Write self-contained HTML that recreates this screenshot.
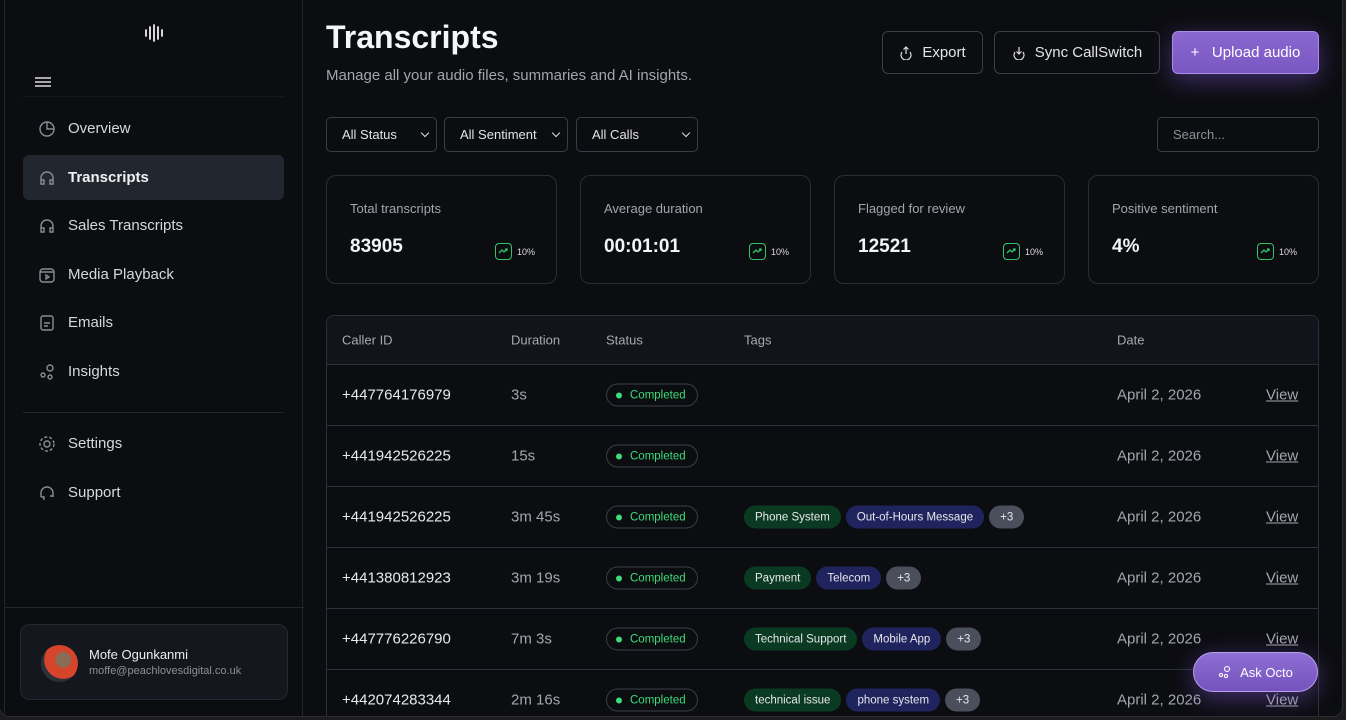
<!DOCTYPE html>
<html><head><meta charset="utf-8"><style>
*{box-sizing:border-box;margin:0;padding:0}
body{width:1346px;height:720px;overflow:hidden;background:#1c1c1e;font-family:"Liberation Sans",sans-serif;color:#e8e9ec}
.frame{position:absolute;left:-1px;top:-1px;width:1344px;height:718px;background:#0c0d11;border:1px solid #2a2c31;border-radius:0 0 10px 10px;overflow:hidden}
.side{position:absolute;left:4px;top:0;width:299px;height:716px;border-right:1px solid #22252c;border-left:1px solid #22252c;background:#0c0d11}
.nav{position:absolute;left:18px;width:261px;height:45px;border-radius:6px;display:flex;align-items:center;padding-left:15px;font-size:15px;color:#d6d8dc}
.nav svg{width:18px;height:18px;margin-right:12px;stroke:#8a8d94;fill:none;stroke-width:1.4}
.nav.act{background:#22262f;font-weight:bold;color:#f0f1f3}
.hr{position:absolute;left:18px;width:261px;height:1px;background:#23262d}
.btn{position:absolute;top:31px;height:43px;border:1px solid #3a3e47;border-radius:6px;display:flex;align-items:center;justify-content:center;font-size:15px;color:#e3e4e7}
.sel{position:absolute;top:117px;height:35px;border:1px solid #3a3e47;border-radius:5px;font-size:13px;padding-left:15px;display:flex;align-items:center;color:#e3e4e7}
.sel.dd:after{content:"";position:absolute;right:8px;top:12px;width:5px;height:5px;border-right:1.5px solid #ddd;border-bottom:1.5px solid #ddd;transform:rotate(45deg)}
.card{position:absolute;top:175px;width:231px;height:109px;border:1px solid #2a2d34;border-radius:10px}
.card .l{position:absolute;left:23px;top:25px;font-size:13px;color:#a3a6ad}
.card .v{position:absolute;left:23px;top:60px;font-size:19px;font-weight:bold;color:#f3f4f6}
.card .b{position:absolute;left:168px;top:67px;width:17px;height:17px;border:1.5px solid #34c46a;border-radius:4px}
.card .b svg{position:absolute;left:2px;top:2px}
.card .p{position:absolute;left:190px;top:71px;font-size:9px;color:#ddd}
.tbl{position:absolute;left:326px;top:315px;width:993px;height:420px;border:1px solid #2c3039;border-radius:8px;overflow:hidden}
.th{position:absolute;top:0;left:0;right:0;height:49px;background:#11141a;border-bottom:1px solid #2c3039;font-size:13px;color:#a7aab1}
.row{position:absolute;left:0;right:0;height:61px;border-bottom:1px solid #2c313b;font-size:15px}
.c{position:absolute;top:50%;transform:translateY(-50%);white-space:nowrap}
.st{height:23px;border:1px solid #3a3e47;border-radius:12px;font-size:11.5px;color:#3ddc7a;padding:0 11px 0 23px;display:flex;align-items:center}
.st:before{content:"";position:absolute;left:9px;top:8px;width:6px;height:6px;border-radius:50%;background:#3ddc7a}
.tags{display:flex;gap:5px}
.tg{height:23px;border-radius:12px;font-size:11.5px;padding:0 11px;display:flex;align-items:center;color:#e6e7ea}
.g{background:#0b3a23}.bl{background:#20245e}.gr{background:#4a4f5b}
</style></head><body><div class="frame">
<div class="side">
 <svg style="position:absolute;left:139px;top:24px" width="20" height="18" viewBox="0 0 20 18" stroke="#eee" stroke-width="1.8" stroke-linecap="round"><path d="M2 6v6M6 3v12M10 1v16M14 3v12M18 6v6"/></svg>
 <svg style="position:absolute;left:30px;top:76px" width="16" height="12" stroke="#ddd" stroke-width="1.5"><path d="M0 2h16M0 6h16M0 10h16"/></svg>
 <div class="hr" style="top:96px;background:#15171c"></div>
 <div class="nav" style="top:106px"><svg viewBox="0 0 18 18"><circle cx="9" cy="9" r="7"/><path d="M9 2v7h7"/></svg>Overview</div>
 <div class="nav act" style="top:155px"><svg viewBox="0 0 18 18"><path d="M3 12V9a6 6 0 0112 0v3M3 12v3h3v-4H3M15 12v3h-3v-4h3"/></svg>Transcripts</div>
 <div class="nav" style="top:203px"><svg viewBox="0 0 18 18"><path d="M3 12V9a6 6 0 0112 0v3M3 12v3h3v-4H3M15 12v3h-3v-4h3"/></svg>Sales Transcripts</div>
 <div class="nav" style="top:252px"><svg viewBox="0 0 18 18"><rect x="2" y="3" width="14" height="13" rx="3"/><path d="M2 6h14M8 9l3 2-3 2z"/></svg>Media Playback</div>
 <div class="nav" style="top:300px"><svg viewBox="0 0 18 18"><rect x="3" y="2" width="12" height="14" rx="2"/><path d="M6 9h6M6 12h4"/></svg>Emails</div>
 <div class="nav" style="top:349px"><svg viewBox="0 0 18 18"><circle cx="12" cy="5" r="3"/><circle cx="5" cy="12" r="2"/><circle cx="12" cy="14" r="2"/></svg>Insights</div>
 <div class="hr" style="top:412px"></div>
 <div class="nav" style="top:421px"><svg viewBox="0 0 18 18"><circle cx="9" cy="9" r="3"/><circle cx="9" cy="9" r="7" stroke-dasharray="3 2"/></svg>Settings</div>
 <div class="nav" style="top:470px"><svg viewBox="0 0 18 18"><path d="M3 13V9a6 6 0 0112 0v4M3 13h3v3M15 12h-3"/></svg>Support</div>
 <div class="hr" style="top:607px;left:0;width:299px"></div>
 <div style="position:absolute;left:15px;top:624px;width:268px;height:76px;border:1px solid #262930;border-radius:10px;background:#14171d">
  <div style="position:absolute;left:20px;top:20px;width:37px;height:37px;border-radius:50%;background:radial-gradient(circle at 60% 40%,#8a6b55 0 25%,#d6442b 26% 60%,#2c3137 61%)"></div>
  <div style="position:absolute;left:68px;top:22px;font-size:13px;color:#eee">Mofe Ogunkanmi</div>
  <div style="position:absolute;left:68px;top:40px;font-size:11px;color:#8d9097">moffe@peachlovesdigital.co.uk</div>
 </div>
</div>
<div style="position:absolute;left:326px;top:19px;font-size:32px;font-weight:bold;color:#f5f6f8">Transcripts</div>
<div style="position:absolute;left:326px;top:67px;font-size:15px;color:#a3a6ad">Manage all your audio files, summaries and AI insights.</div>
<div class="btn" style="left:882px;width:101px"><svg width="14" height="14" viewBox="0 0 14 14" fill="none" stroke="#ddd" stroke-width="1.2" style="margin-right:9px"><path d="M7 1v7M4.5 3.5L7 1l2.5 2.5M3 6a5 5 0 108 0"/></svg>Export</div>
<div class="btn" style="left:994px;width:166px"><svg width="14" height="14" viewBox="0 0 14 14" fill="none" stroke="#ddd" stroke-width="1.2" style="margin-right:9px"><path d="M7 1v7M4.5 5.5L7 8l2.5-2.5M3 6a5 5 0 108 0"/></svg>Sync CallSwitch</div>
<div class="btn" style="left:1172px;width:147px;border-color:#a88ce6;background:linear-gradient(#8a68d0,#7a57c2);box-shadow:0 6px 24px rgba(130,90,220,.45);color:#fff">+&nbsp;&nbsp; Upload audio</div>
<div class="sel dd" style="left:326px;width:111px">All Status</div>
<div class="sel dd" style="left:444px;width:124px">All Sentiment</div>
<div class="sel dd" style="left:576px;width:122px">All Calls</div>
<div class="sel" style="left:1157px;width:162px;color:#8d9097">Search...</div>
<div class="card" style="left:326px"><div class="l">Total transcripts</div><div class="v">83905</div><div class="b"><svg width="10" height="10" viewBox="0 0 10 10" fill="none" stroke="#34c46a" stroke-width="1.3"><path d="M1 7l3-3 2 2 3-3M7 3h2v2"/></svg></div><div class="p">10%</div></div>
<div class="card" style="left:580px"><div class="l">Average duration</div><div class="v">00:01:01</div><div class="b"><svg width="10" height="10" viewBox="0 0 10 10" fill="none" stroke="#34c46a" stroke-width="1.3"><path d="M1 7l3-3 2 2 3-3M7 3h2v2"/></svg></div><div class="p">10%</div></div>
<div class="card" style="left:834px"><div class="l">Flagged for review</div><div class="v">12521</div><div class="b"><svg width="10" height="10" viewBox="0 0 10 10" fill="none" stroke="#34c46a" stroke-width="1.3"><path d="M1 7l3-3 2 2 3-3M7 3h2v2"/></svg></div><div class="p">10%</div></div>
<div class="card" style="left:1088px"><div class="l">Positive sentiment</div><div class="v">4%</div><div class="b"><svg width="10" height="10" viewBox="0 0 10 10" fill="none" stroke="#34c46a" stroke-width="1.3"><path d="M1 7l3-3 2 2 3-3M7 3h2v2"/></svg></div><div class="p">10%</div></div>
<div class="tbl">
 <div class="th"><span class="c" style="left:15px">Caller ID</span><span class="c" style="left:184px">Duration</span><span class="c" style="left:279px">Status</span><span class="c" style="left:417px">Tags</span><span class="c" style="left:790px">Date</span></div>
 <div class="row" style="top:49px"><span class="c" style="left:15px">+447764176979</span><span class="c" style="left:184px;color:#a3a6ad">3s</span><span class="c st" style="left:279px">Completed</span><span class="c" style="left:790px;color:#a3a6ad">April 2, 2026</span><span class="c" style="left:939px;color:#a3a6ad;text-decoration:underline">View</span></div>
 <div class="row" style="top:110px"><span class="c" style="left:15px">+441942526225</span><span class="c" style="left:184px;color:#a3a6ad">15s</span><span class="c st" style="left:279px">Completed</span><span class="c" style="left:790px;color:#a3a6ad">April 2, 2026</span><span class="c" style="left:939px;color:#a3a6ad;text-decoration:underline">View</span></div>
 <div class="row" style="top:171px"><span class="c" style="left:15px">+441942526225</span><span class="c" style="left:184px;color:#a3a6ad">3m 45s</span><span class="c st" style="left:279px">Completed</span><span class="c tags" style="left:417px"><span class="tg g">Phone System</span><span class="tg bl">Out-of-Hours Message</span><span class="tg gr">+3</span></span><span class="c" style="left:790px;color:#a3a6ad">April 2, 2026</span><span class="c" style="left:939px;color:#a3a6ad;text-decoration:underline">View</span></div>
 <div class="row" style="top:232px"><span class="c" style="left:15px">+441380812923</span><span class="c" style="left:184px;color:#a3a6ad">3m 19s</span><span class="c st" style="left:279px">Completed</span><span class="c tags" style="left:417px"><span class="tg g">Payment</span><span class="tg bl">Telecom</span><span class="tg gr">+3</span></span><span class="c" style="left:790px;color:#a3a6ad">April 2, 2026</span><span class="c" style="left:939px;color:#a3a6ad;text-decoration:underline">View</span></div>
 <div class="row" style="top:293px"><span class="c" style="left:15px">+447776226790</span><span class="c" style="left:184px;color:#a3a6ad">7m 3s</span><span class="c st" style="left:279px">Completed</span><span class="c tags" style="left:417px"><span class="tg g">Technical Support</span><span class="tg bl">Mobile App</span><span class="tg gr">+3</span></span><span class="c" style="left:790px;color:#a3a6ad">April 2, 2026</span><span class="c" style="left:939px;color:#a3a6ad;text-decoration:underline">View</span></div>
 <div class="row" style="top:354px"><span class="c" style="left:15px">+442074283344</span><span class="c" style="left:184px;color:#a3a6ad">2m 16s</span><span class="c st" style="left:279px">Completed</span><span class="c tags" style="left:417px"><span class="tg g">technical issue</span><span class="tg bl">phone system</span><span class="tg gr">+3</span></span><span class="c" style="left:790px;color:#a3a6ad">April 2, 2026</span><span class="c" style="left:939px;color:#a3a6ad;text-decoration:underline">View</span></div>
</div>
<div style="position:absolute;left:1193px;top:652px;width:125px;height:40px;border-radius:20px;border:1px solid #b8a0ee;background:linear-gradient(#8e6fd4,#7453bd);box-shadow:0 6px 24px rgba(130,90,220,.45);display:flex;align-items:center;justify-content:center;font-size:13px;color:#fff"><svg width="14" height="14" viewBox="0 0 14 14" fill="none" stroke="#fff" stroke-width="1.1" style="margin-right:8px"><circle cx="9" cy="4" r="2.5"/><circle cx="3" cy="10" r="1.6"/><circle cx="8" cy="11" r="1.6"/></svg>Ask Octo</div>
</div></body></html>
